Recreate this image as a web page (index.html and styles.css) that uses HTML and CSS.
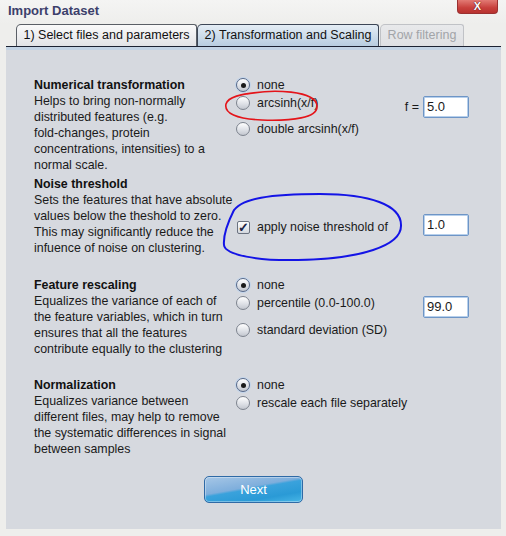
FILE: index.html
```html
<!DOCTYPE html>
<html>
<head>
<meta charset="utf-8">
<link rel="stylesheet" href="styles.css">
</head>
<body>
<div class="window">
  <div class="titlebar">
    <span class="title">Import Dataset</span>
    <div class="close">X</div>
  </div>
  <div class="tabs">
    <div class="tab tab1">1) Select files and parameters</div>
    <div class="tab tab2 selected">2) Transformation and Scaling</div>
    <div class="tab tab3 disabled">Row filtering</div>
  </div>
  <div class="panel">
    <div class="strip"></div>
    <div class="body">
      <div class="section s1">
        <div class="desc"><b>Numerical transformation</b><br>Helps to bring non-normally<br>distributed features (e.g.<br>fold-changes, protein<br>concentrations, intensities) to a<br>normal scale.</div>
        <div class="opts">
          <div class="row"><span class="radio on"></span>none</div>
          <div class="row"><span class="radio"></span>arcsinh(x/f)</div>
          <div class="row gap8"><span class="radio"></span>double arcsinh(x/f)</div>
        </div>
        <div class="extra off19"><span class="flabel">f =</span><div class="input">5.0</div></div>
      </div>
      <div class="section s2">
        <div class="desc"><b>Noise threshold</b><br>Sets the features that have absolute<br>values below the theshold to zero.<br>This may significantly reduce the<br>infuence of noise on clustering.</div>
        <div class="opts off42">
          <div class="row"><span class="check">&#10003;</span>apply noise threshold of</div>
        </div>
        <div class="extra off39"><div class="input">1.0</div></div>
      </div>
      <div class="section s3">
        <div class="desc"><b>Feature rescaling</b><br>Equalizes the variance of each of<br>the feature variables, which in turn<br>ensures that all the features<br>contribute equally to the clustering</div>
        <div class="opts">
          <div class="row"><span class="radio on"></span>none</div>
          <div class="row"><span class="radio"></span>percentile (0.0-100.0)</div>
          <div class="row gap9"><span class="radio"></span>standard deviation (SD)</div>
        </div>
        <div class="extra off19"><div class="input">99.0</div></div>
      </div>
      <div class="section s4">
        <div class="desc"><b>Normalization</b><br>Equalizes variance between<br>different files, may help to remove<br>the systematic differences in signal<br>between samples</div>
        <div class="opts">
          <div class="row"><span class="radio on"></span>none</div>
          <div class="row"><span class="radio"></span>rescale each file separately</div>
        </div>
      </div>
      <div class="actions"><div class="next">Next</div></div>
    </div>
  </div>
  <svg class="marks" width="506" height="536" viewBox="0 0 506 536">
    <path d="M247 94 C272 89 316 90 317 106 C318 118 292 121 262 120 C236 119 224 113 226 104 C228 97 240 94 262 92" fill="none" stroke="#e4141a" stroke-width="1.6" stroke-linecap="round"/>
    <path d="M233 212 C240 198 272 194 320 194 C370 194 401 205 401 225 C402 246 360 259 298 260 C258 261 225 255 224 245 C223 234 228 222 234 210" fill="none" stroke="#1414e6" stroke-width="2" stroke-linecap="round"/>
  </svg>
</div>
</body>
</html>
```
FILE: styles.css
```css
html, body {
  margin: 0;
  padding: 0;
}
body {
  background: #eeeeec;
  font-family: "Liberation Sans", Arial, sans-serif;
  font-size: 12.4px;
  color: #1a1a1a;
}
.window {
  position: relative;
  width: 506px;
  height: 536px;
  overflow: hidden;
}
.titlebar {
  height: 24px;
  display: flex;
  justify-content: space-between;
  align-items: flex-start;
  background: linear-gradient(#f4f4f3, #eeeeec);
}
.title {
  margin: 3px 0 0 8px;
  font-size: 13px;
  font-weight: bold;
  color: #3c3f6b;
}
.close {
  width: 41px;
  height: 14px;
  margin-right: 8px;
  box-sizing: border-box;
  border: 1px solid #9a3030;
  border-top: none;
  border-radius: 0 0 4px 4px;
  background: linear-gradient(#e27a74, #c8403c 60%, #b8322f);
  color: #fff;
  font-weight: bold;
  font-size: 11px;
  line-height: 13px;
  text-align: center;
  text-shadow: 0 0 1px #5a1010, 0 0 1px #5a1010;
}
.tabs {
  display: flex;
  padding-left: 16px;
  height: 22px;
}
.tab {
  box-sizing: border-box;
  height: 22px;
  border: 1px solid #5a5f66;
  border-bottom: none;
  border-radius: 5px 3px 0 0;
  background: linear-gradient(#fafafa, #e2e3e6);
  line-height: 21px;
  font-size: 12.5px;
  text-align: center;
  color: #111;
  white-space: nowrap;
}
.tab1 { width: 181px; }
.tab2 { width: 182px; background: linear-gradient(#e4edf5, #b9cde0); border-color: #3c4656; }
.tab3 { width: 84px; color: #a2a4a8; border-color: #c0c2c6; background: linear-gradient(#e8e9eb, #dfe0e3); margin-left: 1px; }
.panel {
  margin-left: 6px;
  width: 495px;
  border-top: 1px solid #1c2232;
}
.strip {
  height: 3px;
  background: #c3d3e4;
}
.body {
  background: #d6d9df;
  height: 479px;
  box-sizing: border-box;
  padding: 27px 0 0 28px;
}
.section {
  display: flex;
  align-items: flex-start;
}
.s2 { margin-top: 3px; }
.s3 { margin-top: 21px; }
.s4 { margin-top: 20px; }
.desc {
  width: 201px;
  flex-shrink: 0;
  line-height: 16px;
  white-space: nowrap;
}
.desc b { color: #111; }
.opts {
  width: 166px;
  flex-shrink: 0;
  margin-top: -1px;
  white-space: nowrap;
}
.opts.off42 { margin-top: 42px; }
.row {
  height: 18px;
  display: flex;
  align-items: center;
}
.row.gap8 { margin-top: 8px; }
.row.gap9 { margin-top: 9px; }
.radio {
  width: 14px;
  height: 14px;
  flex-shrink: 0;
  box-sizing: border-box;
  margin: 0 7px 0 1px;
  border-radius: 50%;
  border: 1px solid #7d838e;
  background: linear-gradient(#ffffff, #dcdfe5 60%, #c3c7cf);
  display: flex;
  align-items: center;
  justify-content: center;
}
.radio.on {
  border-color: #56698a;
  box-shadow: 0 0 0 1px #c2d4ea;
}
.radio.on::after {
  content: "";
  width: 5px;
  height: 5px;
  border-radius: 50%;
  background: #1a1a1a;
}
.check {
  width: 13px;
  height: 13px;
  flex-shrink: 0;
  box-sizing: border-box;
  margin: 0 7px 0 2px;
  border: 1px solid #6b7280;
  border-radius: 2px;
  background: linear-gradient(#ffffff, #d3d7de);
  color: #1c2546;
  font-size: 13px;
  font-weight: bold;
  line-height: 12px;
  text-align: center;
}
.extra {
  width: 68px;
  flex-shrink: 0;
  display: flex;
  justify-content: flex-end;
  align-items: center;
  white-space: nowrap;
}
.extra.off19 { margin-top: 19px; }
.extra.off39 { margin-top: 38px; }
.flabel {
  margin-right: 4px;
  font-size: 12.5px;
}
.input {
  width: 46px;
  height: 22px;
  flex-shrink: 0;
  box-sizing: border-box;
  border: 1px solid #6e95c6;
  box-shadow: inset 0 0 0 1px #b7d0ec;
  border-radius: 2px;
  background: #fff;
  padding-left: 3px;
  font-size: 13px;
  line-height: 20px;
}
.actions {
  display: flex;
  justify-content: center;
  margin: 19px 0 0 -28px;
}
.next {
  width: 99px;
  height: 27px;
  box-sizing: border-box;
  border: 1px solid #2f6aa6;
  border-radius: 5px;
  background: linear-gradient(170deg, #a7c7e6 0%, #7eaedc 42%, #3aa2dc 48%, #2a9ad6 75%, #48b6e6 100%);
  box-shadow: inset 0 0 0 1px rgba(255,255,255,0.35);
  color: #fff;
  font-size: 13px;
  line-height: 25px;
  text-align: center;
}
.marks {
  position: absolute;
  top: 0;
  left: 0;
  pointer-events: none;
}
```
